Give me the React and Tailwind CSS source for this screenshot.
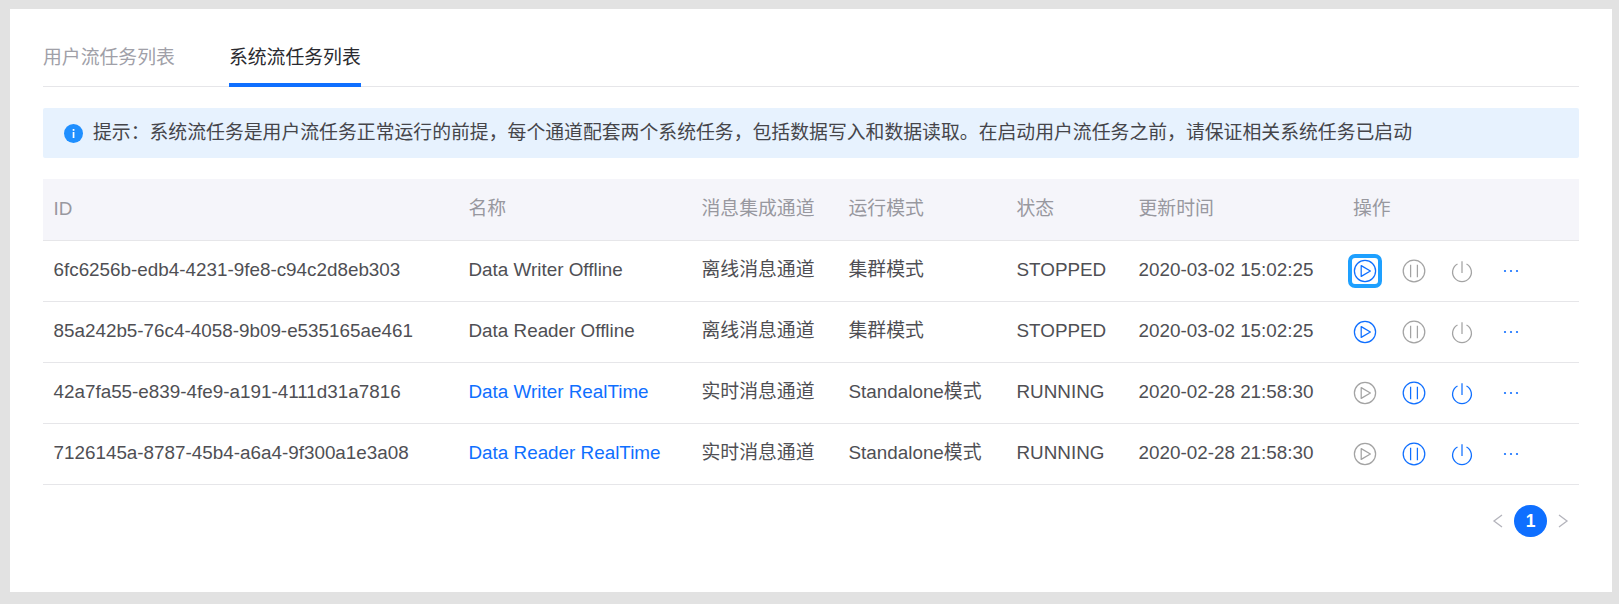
const FONT = '"Liberation Sans","Noto Sans CJK SC",sans-serif';
const GREY = '#a3a3a3';
const BLUE = '#0f6fff';

function Play({ c }) {
  return (
    <svg width="24" height="24" viewBox="0 0 24 24" fill="none" stroke={c} strokeWidth="1.25">
      <circle cx="12" cy="12" r="10.6" />
      <path d="M8.2 6.6v10.8l9.2-5.4z" strokeLinejoin="round" />
    </svg>
  );
}
function Pause({ c }) {
  return (
    <svg width="24" height="24" viewBox="0 0 24 24" fill="none" stroke={c} strokeWidth="1.25">
      <circle cx="12" cy="12" r="10.8" />
      <path d="M8.6 5.8v12.4M15.4 5.8v12.4" />
    </svg>
  );
}
function Power({ c }) {
  return (
    <svg width="24" height="24" viewBox="0 0 24 24" fill="none" stroke={c} strokeWidth="1.25">
      <path d="M7.5 4.95a9.4 9.4 0 1 0 9 0" />
      <path d="M12 2.3v11.7" />
    </svg>
  );
}
function Dots() {
  return (
    <svg width="16" height="4" viewBox="0 0 16 4" fill={BLUE}>
      <circle cx="2" cy="2" r="1.1" />
      <circle cx="8" cy="2" r="1.1" />
      <circle cx="14" cy="2" r="1.1" />
    </svg>
  );
}

const rows = [
  { id: '6fc6256b-edb4-4231-9fe8-c94c2d8eb303', name: 'Data Writer Offline', ch: '离线消息通道', mode: '集群模式', st: 'STOPPED', t: '2020-03-02 15:02:25', on: false, focus: true },
  { id: '85a242b5-76c4-4058-9b09-e535165ae461', name: 'Data Reader Offline', ch: '离线消息通道', mode: '集群模式', st: 'STOPPED', t: '2020-03-02 15:02:25', on: false },
  { id: '42a7fa55-e839-4fe9-a191-4111d31a7816', name: 'Data Writer RealTime', ch: '实时消息通道', mode: 'Standalone模式', st: 'RUNNING', t: '2020-02-28 21:58:30', on: true },
  { id: '7126145a-8787-45b4-a6a4-9f300a1e3a08', name: 'Data Reader RealTime', ch: '实时消息通道', mode: 'Standalone模式', st: 'RUNNING', t: '2020-02-28 21:58:30', on: true },
];

const cols = 'grid grid-cols-[415px_233px_147px_168px_122px_214px_237px] items-center';

export default function App() {
  return (
    <div className="h-[604px] bg-[#e2e2e2] pt-[9px] pl-[10px] pr-[7px] pb-[12px]" style={{ fontFamily: FONT }}>
      <div className="h-full bg-white px-[33px] pt-[30px] text-[18.85px] text-[#4f4f54]">
        <div className="flex gap-[54px] h-[48px] border-b border-[#e6e6e9] w-[1536px]">
          <div className="h-[48px] leading-[37px] text-[#a0a0a8]">用户流任务列表</div>
          <div className="h-[48px] leading-[37px] text-[#2a2a2f] border-b-[4px] border-[#0f6fff]">系统流任务列表</div>
        </div>
        <div className="mt-[21px] h-[50px] w-[1536px] bg-[#e7f2fe] rounded-[2px] flex items-center pl-[21px] gap-[10px] text-[#45454a]">
          <svg width="19" height="19" viewBox="0 0 19 19" className="shrink-0">
            <circle cx="9.5" cy="9.5" r="9.5" fill="#1f8fff" />
            <rect x="8.7" y="8" width="1.7" height="6" fill="#fff" />
            <rect x="8.7" y="5" width="1.7" height="1.8" fill="#fff" />
          </svg>
          <span className="whitespace-nowrap">提示：系统流任务是用户流任务正常运行的前提，每个通道配套两个系统任务，包括数据写入和数据读取。在启动用户流任务之前，请保证相关系统任务已启动</span>
        </div>
        <div className="mt-[21px] w-[1536px]">
          <div className={`${cols} h-[62px] bg-[#f5f5fa] border-b border-[#e6e6e9] text-[#98989f]`}>
            <div className="pl-[10.5px]">ID</div>
            <div className="pl-[10.5px]">名称</div>
            <div className="pl-[10.5px]">消息集成通道</div>
            <div className="pl-[10.5px]">运行模式</div>
            <div className="pl-[10.5px]">状态</div>
            <div className="pl-[10.5px]">更新时间</div>
            <div className="pl-[11px]">操作</div>
          </div>
          {rows.map((r) => (
            <div key={r.id} className={`${cols} h-[61px] pb-[2px] border-b border-[#e6e6e9] whitespace-nowrap`}>
              <div className="pl-[10.5px]">{r.id}</div>
              <div className={r.on ? 'pl-[10.5px] text-[#0f6fff]' : 'pl-[10.5px]'}>{r.name}</div>
              <div className="pl-[10.5px]">{r.ch}</div>
              <div className="pl-[10.5px]">{r.mode}</div>
              <div className="pl-[10.5px]">{r.st}</div>
              <div className="pl-[10.5px]">{r.t}</div>
              <div className="pl-[11px] mt-[2px] flex items-center">
                <span className={r.focus ? 'w-[24px] h-[24px] flex items-center justify-center rounded-[2px] outline-[4px] outline-[#1ea0ff] outline-offset-[1.5px]' : 'w-[24px] h-[24px] flex items-center justify-center'}>
                  <Play c={r.on ? GREY : BLUE} />
                </span>
                <span className="ml-[25px] flex"><Pause c={r.on ? BLUE : GREY} /></span>
                <span className="ml-[24px] flex"><Power c={r.on ? BLUE : GREY} /></span>
                <span className="ml-[29px] flex"><Dots /></span>
              </div>
            </div>
          ))}
        </div>
        <div className="mt-[20px] w-[1536px] flex items-center justify-end pr-[10px] h-[32px]">
          <svg width="12" height="16" viewBox="0 0 12 16" fill="none" stroke="#b4b4bc" strokeWidth="1.3"><path d="M10 2 2 8l8 6" /></svg>
          <div className="ml-[10px] mr-[10px] w-[33px] h-[32px] rounded-full bg-[#0f6fff] text-white font-bold text-[17.5px] flex items-center justify-center">1</div>
          <svg width="12" height="16" viewBox="0 0 12 16" fill="none" stroke="#b4b4bc" strokeWidth="1.3"><path d="m2 2 8 6-8 6" /></svg>
        </div>
      </div>
    </div>
  );
}
